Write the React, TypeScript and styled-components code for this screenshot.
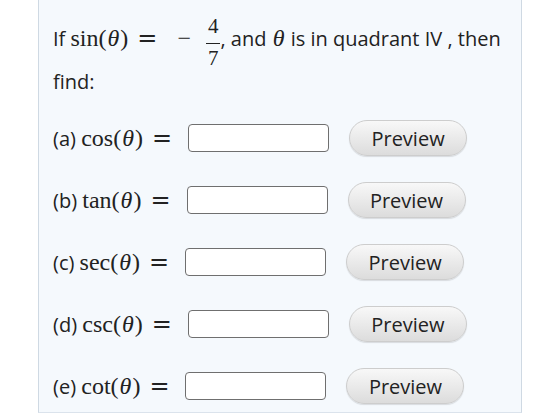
import styled, { createGlobalStyle } from 'styled-components';

const rows = [
  { key: 'a', fn: 'cos' },
  { key: 'b', fn: 'tan' },
  { key: 'c', fn: 'sec' },
  { key: 'd', fn: 'csc' },
  { key: 'e', fn: 'cot' },
];

function App() {
  return (
    <>
      <GlobalStyle />
      <Panel>
        <Intro>
          If{' '}
          <MathText>
            sin(<Theta>θ</Theta>)<Rel>=</Rel>
            <Minus>−</Minus>
            <Fraction>
              <Num>4</Num>
              <Den>7</Den>
            </Fraction>
          </MathText>
          , and <MathText><Theta>θ</Theta></MathText> is in quadrant IV , then
        </Intro>
        <Find>find:</Find>
        <List>
          {rows.map(({ key, fn }) => (
            <Row key={key}>
              <Label>
                ({key}){' '}
                <MathText>
                  {fn}(<Theta>θ</Theta>)<Rel>=</Rel>
                </MathText>
              </Label>
              <Answer type="text" aria-label={`${fn} answer`} />
              <PreviewButton type="button">Preview</PreviewButton>
            </Row>
          ))}
        </List>
      </Panel>
    </>
  );
}

const GlobalStyle = createGlobalStyle`
  body {
    margin: 0;
    background: #ffffff;
    font-family: "Open Sans", "Noto Sans", sans-serif;
    color: #222;
  }
`;

const Panel = styled.div`
  width: 484px;
  height: 413px;
  margin-left: 38px;
  box-sizing: border-box;
  padding: 0 0 0 14px;
  background: #f5f9fd;
  border-left: 1px solid #cfd9e3;
  border-right: 1px solid #cfd9e3;
  border-bottom: 1px solid #dbe3ec;
  overflow: hidden;
`;

const Intro = styled.div`
  padding-top: 16px;
  font-size: 20px;
  line-height: 20px;
  white-space: nowrap;
`;

const MathText = styled.span`
  font-family: "Liberation Serif", "DejaVu Serif", serif;
  font-size: 24px;
`;

const Theta = styled.i`
  font-style: italic;
  margin: 0 1px;
`;

const Rel = styled.span`
  font-family: "DejaVu Serif", serif;
  margin: 0 8px 0 9px;
`;

const Minus = styled.span`
  margin: 0 15px 0 12px;
`;

const Fraction = styled.span`
  display: inline-flex;
  flex-direction: column;
  align-items: center;
  vertical-align: 13px;
  font-size: 21px;
  line-height: 1;
`;

const Num = styled.span`
  padding: 0 2px 6px;
  border-bottom: 1.2px solid #222;
`;

const Den = styled.span`
  padding-top: 4px;
`;

const Find = styled.div`
  font-size: 20px;
  line-height: 20px;
  margin-top: 3px;
`;

const List = styled.div`
  display: flex;
  flex-direction: column;
  margin-top: 15px;
`;

const Row = styled.div`
  display: flex;
  align-items: center;
  height: 62px;
`;

const Label = styled.span`
  font-size: 20px;
  white-space: nowrap;
`;

const Answer = styled.input`
  width: 141px;
  height: 28px;
  box-sizing: border-box;
  margin-left: 8px;
  border: 1.5px solid #6f6f6f;
  border-radius: 4px;
  background: #fff;
`;

const PreviewButton = styled.button`
  width: 118px;
  height: 36px;
  margin-left: 20px;
  padding: 0;
  border: 1px solid #cdcdcd;
  border-radius: 18px;
  background: linear-gradient(#f8f8f8, #dcdcdc);
  box-shadow: 0 1px 1px rgba(0, 0, 0, 0.12);
  font-family: "Open Sans", "Noto Sans", sans-serif;
  font-size: 20px;
  color: #222;
`;

export default App;
